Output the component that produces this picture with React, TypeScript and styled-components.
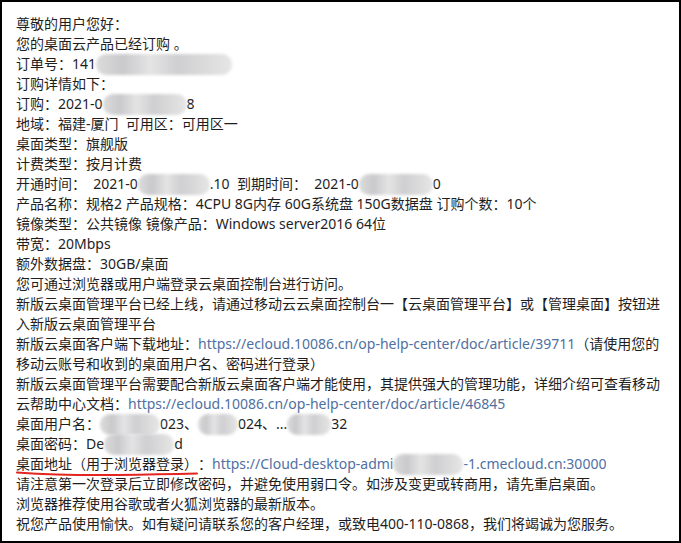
import React, { FC } from 'react';
import styled, { createGlobalStyle } from 'styled-components';

const GlobalStyle = createGlobalStyle`
  html, body {
    margin: 0;
    padding: 0;
    background: #ffffff;
  }
`

const Frame = styled.div`
  box-sizing: border-box;
  width: 681px;
  height: 543px;
  border: 2px solid #000000;
  padding: 12px 14px 0 14px;
  background: #ffffff;
  font-family: "Noto Sans", "Noto Sans CJK SC", sans-serif;
  font-size: 14px;
  line-height: 20px;
  color: #1e1e1e;
  overflow: hidden;
`

const Line = styled.div`
  height: 20px;
  white-space: nowrap;
`

const Link = styled.a`
  color: #50709f;
  text-decoration: none;
`

const Redact = styled.span<{ $w: number }>`
  display: inline-block;
  width: ${p => p.$w}px;
  height: 21px;
  vertical-align: top;
  border-radius: 10px;
  background: linear-gradient(90deg, #dcdcdc 0%, #c9c9cc 20%, #e4e4e4 40%, #cfcfd2 60%, #dadada 80%, #e6e6e6 100%);
  filter: blur(1.5px);
`

const Marked = styled.span`
  position: relative;
  display: inline-block;
  height: 20px;
  vertical-align: top;
`

const Underline = styled.svg`
  position: absolute;
  left: 0;
  bottom: -3px;
  width: 100%;
  height: 6px;
  overflow: visible;
`

const App: FC = () => {
  return (
    <>
      <GlobalStyle />
      <Frame>
        <Line>尊敬的用户您好：</Line>
        <Line>您的桌面云产品已经订购 。</Line>
        <Line>订单号：141<Redact $w={136} /></Line>
        <Line>订购详情如下：</Line>
        <Line>订购：2021-0<Redact $w={84} />8</Line>
        <Line>地域：福建-厦门&nbsp; 可用区：可用区一</Line>
        <Line>桌面类型：旗舰版</Line>
        <Line>计费类型：按月计费</Line>
        <Line>开通时间：&nbsp; 2021-0<Redact $w={72} />.10&nbsp; 到期时间：&nbsp; 2021-0<Redact $w={74} />0</Line>
        <Line>产品名称：规格2 产品规格：4CPU 8G内存 60G系统盘 150G数据盘 订购个数：10个</Line>
        <Line>镜像类型：公共镜像 镜像产品：Windows server2016 64位</Line>
        <Line>带宽：20Mbps</Line>
        <Line>额外数据盘：30GB/桌面</Line>
        <Line>您可通过浏览器或用户端登录云桌面控制台进行访问。</Line>
        <Line>新版云桌面管理平台已经上线，请通过移动云云桌面控制台一【云桌面管理平台】或【管理桌面】按钮进</Line>
        <Line>入新版云桌面管理平台</Line>
        <Line>
          新版云桌面客户端下载地址：<Link href="#">https://ecloud.10086.cn/op-help-center/doc/article/39711</Link>（请使用您的
        </Line>
        <Line>移动云账号和收到的桌面用户名、密码进行登录）</Line>
        <Line>新版云桌面管理平台需要配合新版云桌面客户端才能使用，其提供强大的管理功能，详细介绍可查看移动</Line>
        <Line>
          云帮助中心文档：<Link href="#">https://ecloud.10086.cn/op-help-center/doc/article/46845</Link>
        </Line>
        <Line>桌面用户名：<Redact $w={60} />023、<Redact $w={40} />024、...<Redact $w={44} />32</Line>
        <Line>桌面密码：De<Redact $w={70} />d</Line>
        <Line>
          <Marked>
            桌面地址（用于浏览器登录）
            <Underline viewBox="0 0 180 6" preserveAspectRatio="none">
              <path d="M1 1.5 C 30 3.5, 60 4.5, 100 4 S 160 3, 179 2.5" fill="none" stroke="#e3241f" strokeWidth="2" strokeLinecap="round" />
            </Underline>
          </Marked>
          ：<Link href="#">https://Cloud-desktop-admi<Redact $w={70} />-1.cmecloud.cn:30000</Link>
        </Line>
        <Line>请注意第一次登录后立即修改密码，并避免使用弱口令。如涉及变更或转商用，请先重启桌面。</Line>
        <Line>浏览器推荐使用谷歌或者火狐浏览器的最新版本。</Line>
        <Line>祝您产品使用愉快。如有疑问请联系您的客户经理，或致电400-110-0868，我们将竭诚为您服务。</Line>
      </Frame>
    </>
  )
}

export default App
